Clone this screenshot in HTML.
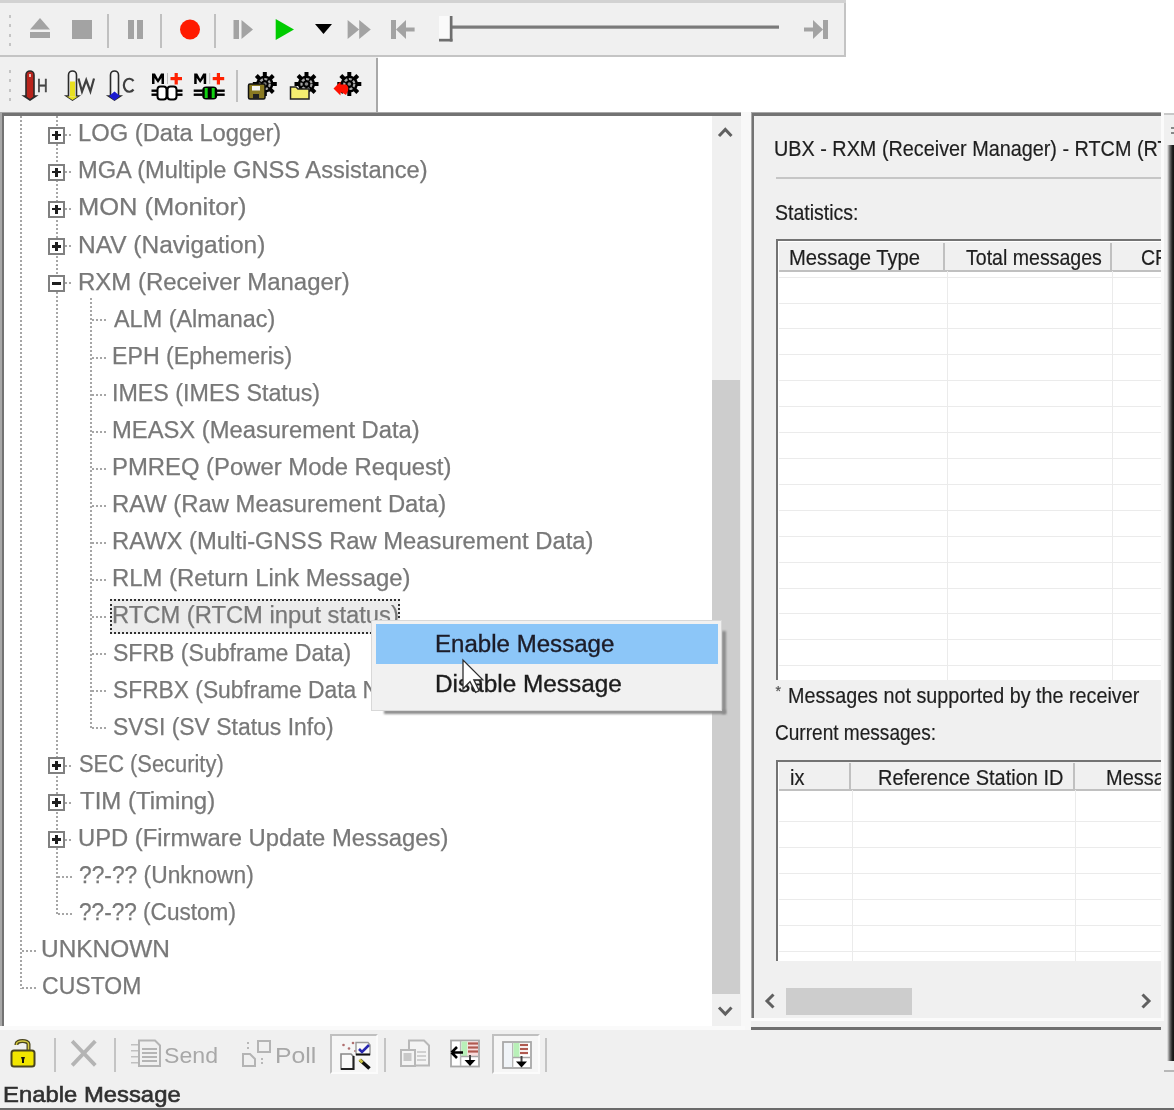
<!DOCTYPE html>
<html><head><meta charset="utf-8"><style>
html,body{margin:0;padding:0;}
body{width:1174px;height:1110px;position:relative;overflow:hidden;background:#f0f0f0;font-family:"Liberation Sans",sans-serif;}
#root{position:absolute;left:0;top:0;width:1174px;height:1110px;overflow:hidden;filter:blur(0.45px);}
</style></head><body><div id="root">
<div style="position:absolute;left:846px;top:0px;width:328px;height:113px;background:#fff;"></div>
<div style="position:absolute;left:378px;top:57px;width:468px;height:56px;background:#fff;"></div>
<div style="position:absolute;left:0px;top:0px;width:846px;height:3px;background:#d2d2d2;"></div>
<div style="position:absolute;left:0px;top:3px;width:845px;height:54px;background:#f0f0f0;"></div>
<div style="position:absolute;left:844px;top:3px;width:2px;height:54px;background:#c4c4c4;"></div>
<div style="position:absolute;left:0px;top:55px;width:846px;height:2px;background:#c4c4c4;"></div>
<div style="position:absolute;left:0px;top:57px;width:377px;height:56px;background:#f0f0f0;"></div>
<div style="position:absolute;left:376px;top:58px;width:2px;height:55px;background:#a8a8a8;"></div>
<div style="position:absolute;left:8.5px;top:15px;width:2.5px;height:2.5px;background:#c4c4c4;"></div>
<div style="position:absolute;left:8.5px;top:24px;width:2.5px;height:2.5px;background:#c4c4c4;"></div>
<div style="position:absolute;left:8.5px;top:34px;width:2.5px;height:2.5px;background:#c4c4c4;"></div>
<div style="position:absolute;left:8.5px;top:43px;width:2.5px;height:2.5px;background:#c4c4c4;"></div>
<div style="position:absolute;left:8.5px;top:70px;width:2.5px;height:2.5px;background:#c4c4c4;"></div>
<div style="position:absolute;left:8.5px;top:79px;width:2.5px;height:2.5px;background:#c4c4c4;"></div>
<div style="position:absolute;left:8.5px;top:89px;width:2.5px;height:2.5px;background:#c4c4c4;"></div>
<div style="position:absolute;left:8.5px;top:98px;width:2.5px;height:2.5px;background:#c4c4c4;"></div>
<div style="position:absolute;left:107px;top:14px;width:2px;height:34px;background:#c0c0c0;"></div>
<div style="position:absolute;left:160px;top:14px;width:2px;height:34px;background:#c0c0c0;"></div>
<div style="position:absolute;left:214px;top:14px;width:2px;height:34px;background:#c0c0c0;"></div>
<div style="position:absolute;left:236px;top:70px;width:2px;height:32px;background:#c0c0c0;"></div>
<svg style="position:absolute;left:0;top:0" width="846" height="113">
 <g fill="#a3a3a3">
  <polygon points="30,29.5 40,18 50,29.5"/>
  <rect x="30" y="32" width="20" height="6"/>
  <rect x="72" y="20" width="20" height="19"/>
  <rect x="128" y="20" width="6" height="19"/>
  <rect x="137" y="20" width="6" height="19"/>
  <rect x="233.5" y="20" width="5.5" height="19"/>
  <polygon points="241.5,20 253,29.5 241.5,39"/>
  <polygon points="347.6,20 359.2,29.5 347.6,39"/>
  <polygon points="359.2,20 370.8,29.5 359.2,39"/>
  <rect x="391" y="20" width="5" height="19"/>
  <polygon points="396,29.5 406,20 406,39"/>
  <rect x="404" y="27.5" width="10.6" height="4"/>
  <rect x="823" y="20" width="5" height="19"/>
  <polygon points="823,29.5 813,20 813,39"/>
  <rect x="804" y="27.5" width="11" height="4"/>
 </g>
 <circle cx="190" cy="29.5" r="10" fill="#ff1a00"/>
 <polygon points="275.7,19 294,29.5 275.7,40" fill="#00cc00"/>
 <polygon points="315,24 332,24 323.5,34" fill="#000"/>
 <rect x="452" y="25.5" width="327" height="3.2" fill="#7a7a7a"/>
 <rect x="439" y="16" width="13" height="25" fill="#fafafa"/>
 <rect x="449.8" y="16" width="2.7" height="25.5" fill="#6e6e6e"/>
 <rect x="439" y="38.8" width="13.5" height="2.7" fill="#6e6e6e"/>
 <!-- thermometers -->
 <g stroke="#2a2a2a" stroke-width="1.6">
  <path d="M26,96 L26,75 A4,4 0 0 1 34,75 L34,96 L36,96 L30,100 L24,96 Z" fill="#b8241c"/>
  <path d="M68.5,96 L68.5,75 A4,4 0 0 1 76.5,75 L76.5,96 L78.5,96 L72.5,100 L66.5,96 Z" fill="#f4f4f4"/>
  <path d="M110.5,96 L110.5,75 A4,4 0 0 1 118.5,75 L118.5,96 L120.5,96 L114.5,100 L108.5,96 Z" fill="#f4f4f4"/>
 </g>
 <rect x="70" y="81.5" width="5" height="15" fill="#e8e020"/>
 <polygon points="67,96.5 72.5,100 78,96.5" fill="#e8e020"/>
 <polygon points="109,96 114.5,100.5 120,96 114.5,91.5" fill="#1a1ad0"/>
 <rect x="29" y="74" width="2" height="3" fill="#e8c0b8"/>
 <g fill="#444" font-family="Liberation Sans" font-size="19">
  <text x="37" y="92" transform="translate(37,0) scale(0.78,1) translate(-37,0)" stroke="#444" stroke-width="0.6">H</text>
 </g>
 <g fill="none" stroke="#404040" stroke-width="2.2">
  <polyline points="78.5,78.5 82,91.5 86.2,80 90.4,91.5 94,78.5"/>
  <path d="M133.5,81 A5.5,6.5 0 1 0 133.5,89.5"/>
 </g>
 <!-- M+ connectors -->
 <g id="mplus">
  <path d="M152,84 L152,73.5 L155,73.5 L158,79 L161,73.5 L164,73.5 L164,84 L161.5,84 L161.5,78 L158,83 L154.5,78 L154.5,84 Z" fill="#000"/>
  <rect x="167" y="73" width="1" height="11" fill="#bbb"/>
  <rect x="170.5" y="77" width="11.5" height="3.2" fill="#ff2000"/>
  <rect x="174.6" y="73" width="3.2" height="11.5" fill="#ff2000"/>
  <g fill="#000">
   <rect x="151.5" y="89.5" width="7" height="2.4"/><rect x="151.5" y="93.5" width="7" height="2.4"/>
   <rect x="175.5" y="89.5" width="7" height="2.4"/><rect x="175.5" y="93.5" width="7" height="2.4"/>
  </g>
  <rect x="157.5" y="86.5" width="9" height="13" rx="3" fill="#fff" stroke="#000" stroke-width="2"/>
  <rect x="167.5" y="86.5" width="9" height="13" rx="3" fill="#fff" stroke="#000" stroke-width="2"/>
 </g>
 <g transform="translate(42.2,0)">
  <path d="M152,84 L152,73.5 L155,73.5 L158,79 L161,73.5 L164,73.5 L164,84 L161.5,84 L161.5,78 L158,83 L154.5,78 L154.5,84 Z" fill="#000"/>
  <rect x="167" y="73" width="1" height="11" fill="#bbb"/>
  <rect x="170.5" y="77" width="11.5" height="3.2" fill="#ff2000"/>
  <rect x="174.6" y="73" width="3.2" height="11.5" fill="#ff2000"/>
  <g fill="#000">
   <rect x="151.5" y="89.5" width="9" height="2.4"/><rect x="151.5" y="93.5" width="9" height="2.4"/>
   <rect x="174.5" y="89.5" width="8" height="2.4"/><rect x="174.5" y="93.5" width="8" height="2.4"/>
  </g>
  <rect x="160" y="86.5" width="15" height="13" rx="4" fill="#000"/>
  <rect x="162.5" y="88" width="3" height="10" fill="#10d010"/>
  <rect x="169.5" y="88" width="3" height="10" fill="#10d010"/>
 </g>
 <!-- gears -->
 <defs>
  <g id="gear">
   <circle cx="0" cy="0" r="8.6" fill="#000"/>
   <g fill="#000">
    <rect x="-2" y="-12" width="4" height="24"/>
    <rect x="-2" y="-12" width="4" height="24" transform="rotate(45)"/>
    <rect x="-2" y="-12" width="4" height="24" transform="rotate(90)"/>
    <rect x="-2" y="-12" width="4" height="24" transform="rotate(135)"/>
   </g>
   <circle cx="0" cy="0" r="5" fill="none" stroke="#a8a8a8" stroke-width="2.2" stroke-dasharray="3 1.5"/>
   <circle cx="0" cy="0" r="1.8" fill="#888"/>
  </g>
 </defs>
 <use href="#gear" x="264.8" y="84"/>
 <use href="#gear" x="306.5" y="84"/>
 <use href="#gear" x="349.3" y="84"/>
 <rect x="248.5" y="84" width="16.5" height="15" rx="1.5" fill="#8a7a22" stroke="#111" stroke-width="1.5"/>
 <rect x="252" y="86" width="8" height="4.5" fill="#f4f4f4"/>
 <rect x="253" y="94" width="6" height="5" fill="#222"/>
 <path d="M290.5,99 L290.5,87 L296,87 L298,89 L309,89 L309,99 Z" fill="#f5ee70" stroke="#222" stroke-width="1.5"/>
 <path d="M333.5,88.5 L340.5,81.5 L340.5,84.5 L346,84.5 Q349,86 348,91 L346,95 L342,92.5 L340.5,92.5 L340.5,95.5 Z" fill="#ff1000"/>
</svg>

<div style="position:absolute;left:0px;top:111.5px;width:743px;height:4.5px;background:#a8a8a8;"></div>
<div style="position:absolute;left:0px;top:111.5px;width:4px;height:915.5px;background:#a8a8a8;"></div>
<div style="position:absolute;left:1.6px;top:113.2px;width:741px;height:2.8px;background:#737373;"></div>
<div style="position:absolute;left:1.6px;top:113.2px;width:2.4px;height:913.8px;background:#737373;"></div>
<div style="position:absolute;left:4px;top:116px;width:708px;height:910px;background:#fff;"></div>
<div style="position:absolute;left:741px;top:112px;width:10px;height:918px;background:#f8f8f8;"></div>
<div style="position:absolute;left:0px;top:1026px;width:745px;height:4px;background:#fafafa;"></div>
<div style="position:absolute;left:712px;top:116px;width:29px;height:910px;background:#f0f0f0;"></div>
<div style="position:absolute;left:712px;top:380px;width:28px;height:614px;background:#cdcdcd;"></div>
<svg style="position:absolute;left:0;top:0" width="745" height="1030"><polyline points="719,136 725.3,129.5 731.5,136" fill="none" stroke="#606060" stroke-width="3"/><polyline points="719,1007.5 725.3,1014 731.5,1007.5" fill="none" stroke="#606060" stroke-width="3"/></svg>
<div style="position:absolute;left:20px;top:116px;width:2px;height:873px;background:repeating-linear-gradient(to bottom,#a6a6a6 0 2px,transparent 2px 4px);"></div>
<div style="position:absolute;left:22px;top:949.98px;width:16px;height:2px;background:repeating-linear-gradient(to right,#a6a6a6 0 2px,transparent 2px 4px);"></div>
<div style="position:absolute;left:22px;top:987.07px;width:16px;height:2px;background:repeating-linear-gradient(to right,#a6a6a6 0 2px,transparent 2px 4px);"></div>
<div style="position:absolute;left:56px;top:116px;width:2px;height:798px;background:repeating-linear-gradient(to bottom,#a6a6a6 0 2px,transparent 2px 4px);"></div>
<div style="position:absolute;left:90px;top:298px;width:2px;height:431.44000000000005px;background:repeating-linear-gradient(to bottom,#a6a6a6 0 2px,transparent 2px 4px);"></div>
<div style="position:absolute;left:65px;top:134.0px;width:7px;height:2px;background:repeating-linear-gradient(to right,#a6a6a6 0 2px,transparent 2px 4px);"></div>
<div style="position:absolute;left:48px;top:126.5px;width:17px;height:17px;box-sizing:border-box;border:2.3px solid #808080;background:#fff;"></div>
<div style="position:absolute;left:52px;top:133.75px;width:9px;height:2.5px;background:#1e1e1e;"></div>
<div style="position:absolute;left:55.2px;top:130.5px;width:2.5px;height:9px;background:#1e1e1e;"></div>
<div style="position:absolute;left:65px;top:171.09px;width:7px;height:2px;background:repeating-linear-gradient(to right,#a6a6a6 0 2px,transparent 2px 4px);"></div>
<div style="position:absolute;left:48px;top:163.59px;width:17px;height:17px;box-sizing:border-box;border:2.3px solid #808080;background:#fff;"></div>
<div style="position:absolute;left:52px;top:170.84px;width:9px;height:2.5px;background:#1e1e1e;"></div>
<div style="position:absolute;left:55.2px;top:167.59px;width:2.5px;height:9px;background:#1e1e1e;"></div>
<div style="position:absolute;left:65px;top:208.18px;width:7px;height:2px;background:repeating-linear-gradient(to right,#a6a6a6 0 2px,transparent 2px 4px);"></div>
<div style="position:absolute;left:48px;top:200.68px;width:17px;height:17px;box-sizing:border-box;border:2.3px solid #808080;background:#fff;"></div>
<div style="position:absolute;left:52px;top:207.93px;width:9px;height:2.5px;background:#1e1e1e;"></div>
<div style="position:absolute;left:55.2px;top:204.68px;width:2.5px;height:9px;background:#1e1e1e;"></div>
<div style="position:absolute;left:65px;top:245.27px;width:7px;height:2px;background:repeating-linear-gradient(to right,#a6a6a6 0 2px,transparent 2px 4px);"></div>
<div style="position:absolute;left:48px;top:237.77px;width:17px;height:17px;box-sizing:border-box;border:2.3px solid #808080;background:#fff;"></div>
<div style="position:absolute;left:52px;top:245.02px;width:9px;height:2.5px;background:#1e1e1e;"></div>
<div style="position:absolute;left:55.2px;top:241.77px;width:2.5px;height:9px;background:#1e1e1e;"></div>
<div style="position:absolute;left:65px;top:282.36px;width:7px;height:2px;background:repeating-linear-gradient(to right,#a6a6a6 0 2px,transparent 2px 4px);"></div>
<div style="position:absolute;left:48px;top:274.86px;width:17px;height:17px;box-sizing:border-box;border:2.3px solid #808080;background:#fff;"></div>
<div style="position:absolute;left:52px;top:282.11px;width:9px;height:2.5px;background:#1e1e1e;"></div>
<div style="position:absolute;left:92px;top:319.45000000000005px;width:16px;height:2px;background:repeating-linear-gradient(to right,#a6a6a6 0 2px,transparent 2px 4px);"></div>
<div style="position:absolute;left:92px;top:356.54px;width:16px;height:2px;background:repeating-linear-gradient(to right,#a6a6a6 0 2px,transparent 2px 4px);"></div>
<div style="position:absolute;left:92px;top:393.63px;width:16px;height:2px;background:repeating-linear-gradient(to right,#a6a6a6 0 2px,transparent 2px 4px);"></div>
<div style="position:absolute;left:92px;top:430.72px;width:16px;height:2px;background:repeating-linear-gradient(to right,#a6a6a6 0 2px,transparent 2px 4px);"></div>
<div style="position:absolute;left:92px;top:467.81000000000006px;width:16px;height:2px;background:repeating-linear-gradient(to right,#a6a6a6 0 2px,transparent 2px 4px);"></div>
<div style="position:absolute;left:92px;top:504.90000000000003px;width:16px;height:2px;background:repeating-linear-gradient(to right,#a6a6a6 0 2px,transparent 2px 4px);"></div>
<div style="position:absolute;left:92px;top:541.99px;width:16px;height:2px;background:repeating-linear-gradient(to right,#a6a6a6 0 2px,transparent 2px 4px);"></div>
<div style="position:absolute;left:92px;top:579.08px;width:16px;height:2px;background:repeating-linear-gradient(to right,#a6a6a6 0 2px,transparent 2px 4px);"></div>
<div style="position:absolute;left:92px;top:616.1700000000001px;width:16px;height:2px;background:repeating-linear-gradient(to right,#a6a6a6 0 2px,transparent 2px 4px);"></div>
<div style="position:absolute;left:92px;top:653.26px;width:16px;height:2px;background:repeating-linear-gradient(to right,#a6a6a6 0 2px,transparent 2px 4px);"></div>
<div style="position:absolute;left:92px;top:690.35px;width:16px;height:2px;background:repeating-linear-gradient(to right,#a6a6a6 0 2px,transparent 2px 4px);"></div>
<div style="position:absolute;left:92px;top:727.44px;width:16px;height:2px;background:repeating-linear-gradient(to right,#a6a6a6 0 2px,transparent 2px 4px);"></div>
<div style="position:absolute;left:65px;top:764.5300000000001px;width:7px;height:2px;background:repeating-linear-gradient(to right,#a6a6a6 0 2px,transparent 2px 4px);"></div>
<div style="position:absolute;left:48px;top:757.0300000000001px;width:17px;height:17px;box-sizing:border-box;border:2.3px solid #808080;background:#fff;"></div>
<div style="position:absolute;left:52px;top:764.2800000000001px;width:9px;height:2.5px;background:#1e1e1e;"></div>
<div style="position:absolute;left:55.2px;top:761.0300000000001px;width:2.5px;height:9px;background:#1e1e1e;"></div>
<div style="position:absolute;left:65px;top:801.6200000000001px;width:7px;height:2px;background:repeating-linear-gradient(to right,#a6a6a6 0 2px,transparent 2px 4px);"></div>
<div style="position:absolute;left:48px;top:794.1200000000001px;width:17px;height:17px;box-sizing:border-box;border:2.3px solid #808080;background:#fff;"></div>
<div style="position:absolute;left:52px;top:801.3700000000001px;width:9px;height:2.5px;background:#1e1e1e;"></div>
<div style="position:absolute;left:55.2px;top:798.1200000000001px;width:2.5px;height:9px;background:#1e1e1e;"></div>
<div style="position:absolute;left:65px;top:838.71px;width:7px;height:2px;background:repeating-linear-gradient(to right,#a6a6a6 0 2px,transparent 2px 4px);"></div>
<div style="position:absolute;left:48px;top:831.21px;width:17px;height:17px;box-sizing:border-box;border:2.3px solid #808080;background:#fff;"></div>
<div style="position:absolute;left:52px;top:838.46px;width:9px;height:2.5px;background:#1e1e1e;"></div>
<div style="position:absolute;left:55.2px;top:835.21px;width:2.5px;height:9px;background:#1e1e1e;"></div>
<div style="position:absolute;left:58px;top:875.8000000000001px;width:14px;height:2px;background:repeating-linear-gradient(to right,#a6a6a6 0 2px,transparent 2px 4px);"></div>
<div style="position:absolute;left:58px;top:912.8900000000001px;width:14px;height:2px;background:repeating-linear-gradient(to right,#a6a6a6 0 2px,transparent 2px 4px);"></div>
<div style="position:absolute;left:78.04px;top:120.31px;height:26.45px;line-height:26.45px;font-size:23px;font-weight:400;color:#787878;white-space:nowrap;transform-origin:0 0;transform:scaleX(1.0325);-webkit-text-stroke:0.25px #787878;">LOG (Data Logger)</div>
<div style="position:absolute;left:78.04px;top:157.40px;height:26.45px;line-height:26.45px;font-size:23px;font-weight:400;color:#787878;white-space:nowrap;transform-origin:0 0;transform:scaleX(1.0282);-webkit-text-stroke:0.25px #787878;">MGA (Multiple GNSS Assistance)</div>
<div style="position:absolute;left:77.88px;top:194.49px;height:26.45px;line-height:26.45px;font-size:23px;font-weight:400;color:#787878;white-space:nowrap;transform-origin:0 0;transform:scaleX(1.1081);-webkit-text-stroke:0.25px #787878;">MON (Monitor)</div>
<div style="position:absolute;left:77.97px;top:231.58px;height:26.45px;line-height:26.45px;font-size:23px;font-weight:400;color:#787878;white-space:nowrap;transform-origin:0 0;transform:scaleX(1.0647);-webkit-text-stroke:0.25px #787878;">NAV (Navigation)</div>
<div style="position:absolute;left:78.02px;top:268.67px;height:26.45px;line-height:26.45px;font-size:23px;font-weight:400;color:#787878;white-space:nowrap;transform-origin:0 0;transform:scaleX(1.0424);-webkit-text-stroke:0.25px #787878;">RXM (Receiver Manager)</div>
<div style="position:absolute;left:114.20px;top:305.76px;height:26.45px;line-height:26.45px;font-size:23px;font-weight:400;color:#787878;white-space:nowrap;transform-origin:0 0;transform:scaleX(1.0178);-webkit-text-stroke:0.25px #787878;">ALM (Almanac)</div>
<div style="position:absolute;left:112.19px;top:342.85px;height:26.45px;line-height:26.45px;font-size:23px;font-weight:400;color:#787878;white-space:nowrap;transform-origin:0 0;transform:scaleX(1.0068);-webkit-text-stroke:0.25px #787878;">EPH (Ephemeris)</div>
<div style="position:absolute;left:112.18px;top:379.94px;height:26.45px;line-height:26.45px;font-size:23px;font-weight:400;color:#787878;white-space:nowrap;transform-origin:0 0;transform:scaleX(1.0114);-webkit-text-stroke:0.25px #787878;">IMES (IMES Status)</div>
<div style="position:absolute;left:112.13px;top:417.03px;height:26.45px;line-height:26.45px;font-size:23px;font-weight:400;color:#787878;white-space:nowrap;transform-origin:0 0;transform:scaleX(1.0332);-webkit-text-stroke:0.25px #787878;">MEASX (Measurement Data)</div>
<div style="position:absolute;left:112.13px;top:454.12px;height:26.45px;line-height:26.45px;font-size:23px;font-weight:400;color:#787878;white-space:nowrap;transform-origin:0 0;transform:scaleX(1.0373);-webkit-text-stroke:0.25px #787878;">PMREQ (Power Mode Request)</div>
<div style="position:absolute;left:112.13px;top:491.21px;height:26.45px;line-height:26.45px;font-size:23px;font-weight:400;color:#787878;white-space:nowrap;transform-origin:0 0;transform:scaleX(1.0361);-webkit-text-stroke:0.25px #787878;">RAW (Raw Measurement Data)</div>
<div style="position:absolute;left:112.13px;top:528.30px;height:26.45px;line-height:26.45px;font-size:23px;font-weight:400;color:#787878;white-space:nowrap;transform-origin:0 0;transform:scaleX(1.0340);-webkit-text-stroke:0.25px #787878;">RAWX (Multi-GNSS Raw Measurement Data)</div>
<div style="position:absolute;left:112.12px;top:565.39px;height:26.45px;line-height:26.45px;font-size:23px;font-weight:400;color:#787878;white-space:nowrap;transform-origin:0 0;transform:scaleX(1.0380);-webkit-text-stroke:0.25px #787878;">RLM (Return Link Message)</div>
<div style="position:absolute;left:110px;top:599px;width:290px;height:35px;box-sizing:border-box;border:2px dotted #303030;background:#ececec;"></div>
<div style="position:absolute;left:112.13px;top:602.48px;height:26.45px;line-height:26.45px;font-size:23px;font-weight:400;color:#787878;white-space:nowrap;transform-origin:0 0;transform:scaleX(1.0328);-webkit-text-stroke:0.25px #787878;">RTCM (RTCM input status)</div>
<div style="position:absolute;left:113.20px;top:639.57px;height:26.45px;line-height:26.45px;font-size:23px;font-weight:400;color:#787878;white-space:nowrap;transform-origin:0 0;transform:scaleX(1.0017);-webkit-text-stroke:0.25px #787878;">SFRB (Subframe Data)</div>
<div style="position:absolute;left:113.21px;top:676.66px;height:26.45px;line-height:26.45px;font-size:23px;font-weight:400;color:#787878;white-space:nowrap;transform-origin:0 0;transform:scaleX(0.9910);-webkit-text-stroke:0.25px #787878;">SFRBX (Subframe Data NTC)</div>
<div style="position:absolute;left:113.20px;top:713.75px;height:26.45px;line-height:26.45px;font-size:23px;font-weight:400;color:#787878;white-space:nowrap;transform-origin:0 0;transform:scaleX(0.9973);-webkit-text-stroke:0.25px #787878;">SVSI (SV Status Info)</div>
<div style="position:absolute;left:79.15px;top:750.84px;height:26.45px;line-height:26.45px;font-size:23px;font-weight:400;color:#787878;white-space:nowrap;transform-origin:0 0;transform:scaleX(0.9513);-webkit-text-stroke:0.25px #787878;">SEC (Security)</div>
<div style="position:absolute;left:80.10px;top:787.93px;height:26.45px;line-height:26.45px;font-size:23px;font-weight:400;color:#787878;white-space:nowrap;transform-origin:0 0;transform:scaleX(1.0437);-webkit-text-stroke:0.25px #787878;">TIM (Timing)</div>
<div style="position:absolute;left:78.03px;top:825.02px;height:26.45px;line-height:26.45px;font-size:23px;font-weight:400;color:#787878;white-space:nowrap;transform-origin:0 0;transform:scaleX(1.0349);-webkit-text-stroke:0.25px #787878;">UPD (Firmware Update Messages)</div>
<div style="position:absolute;left:79.11px;top:862.11px;height:26.45px;line-height:26.45px;font-size:23px;font-weight:400;color:#787878;white-space:nowrap;transform-origin:0 0;transform:scaleX(0.9908);-webkit-text-stroke:0.25px #787878;">&#63;&#63;-&#63;&#63; (Unknown)</div>
<div style="position:absolute;left:79.12px;top:899.20px;height:26.45px;line-height:26.45px;font-size:23px;font-weight:400;color:#787878;white-space:nowrap;transform-origin:0 0;transform:scaleX(0.9822);-webkit-text-stroke:0.25px #787878;">&#63;&#63;-&#63;&#63; (Custom)</div>
<div style="position:absolute;left:40.97px;top:936.29px;height:26.45px;line-height:26.45px;font-size:23px;font-weight:400;color:#787878;white-space:nowrap;transform-origin:0 0;transform:scaleX(1.0627);-webkit-text-stroke:0.25px #787878;">UNKNOWN</div>
<div style="position:absolute;left:42.10px;top:973.38px;height:26.45px;line-height:26.45px;font-size:23px;font-weight:400;color:#787878;white-space:nowrap;transform-origin:0 0;transform:scaleX(1.0000);-webkit-text-stroke:0.25px #787878;">CUSTOM</div>
<div style="position:absolute;left:750.5px;top:111.5px;width:411px;height:4.5px;background:#a8a8a8;"></div>
<div style="position:absolute;left:750.5px;top:111.5px;width:3.8px;height:906.5px;background:#a8a8a8;"></div>
<div style="position:absolute;left:751.5px;top:113.2px;width:410px;height:2.8px;background:#737373;"></div>
<div style="position:absolute;left:751.5px;top:113.2px;width:2.8px;height:904.8px;background:#737373;"></div>
<div style="position:absolute;left:754px;top:116px;width:407px;height:902px;background:#f0f0f0;"></div>
<div style="position:absolute;left:751px;top:1018px;width:413px;height:3px;background:#fbfbfb;"></div>
<div style="position:absolute;left:1161px;top:112px;width:3px;height:909px;background:#fbfbfb;"></div>
<div style="position:absolute;left:751px;top:1027px;width:410px;height:3px;background:#6e6e6e;"></div>
<div style="position:absolute;left:754px;top:116px;width:407px;height:902px;overflow:hidden;">
<div style="position:absolute;left:20.30px;top:20.03px;height:25.3px;line-height:25.3px;font-size:22px;font-weight:400;color:#1e1e1e;white-space:nowrap;transform-origin:0 0;transform:scaleX(0.9006);-webkit-text-stroke:0.2px #1e1e1e;">UBX - RXM (Receiver Manager) - RTCM (RTCM input status)</div>
<div style="position:absolute;left:22px;top:60.5px;width:390px;height:2.5px;background:#c6c6c6;"></div>
<div style="position:absolute;left:20.89px;top:85.39px;height:24.72px;line-height:24.72px;font-size:21.5px;font-weight:400;color:#1e1e1e;white-space:nowrap;transform-origin:0 0;transform:scaleX(0.9079);-webkit-text-stroke:0.2px #1e1e1e;">Statistics:</div>
<div style="position:absolute;left:22px;top:123px;width:400px;height:441px;background:#fff;"></div>
<div style="position:absolute;left:22px;top:123px;width:400px;height:2.2px;background:#737373;"></div>
<div style="position:absolute;left:22px;top:123px;width:2.2px;height:441px;background:#737373;"></div>
<div style="position:absolute;left:24.5px;top:125.5px;width:400px;height:29.5px;background:#f0f0f0;"></div>
<div style="position:absolute;left:24.5px;top:154px;width:400px;height:2px;background:#c0c0c0;"></div>
<div style="position:absolute;left:188.5px;top:127px;width:2px;height:28px;background:#c0c0c0;"></div>
<div style="position:absolute;left:356px;top:127px;width:2px;height:28px;background:#c0c0c0;"></div>
<div style="position:absolute;left:24.5px;top:160.60000000000002px;width:400px;height:1px;background:#ebebeb;"></div>
<div style="position:absolute;left:24.5px;top:186.51000000000005px;width:400px;height:1px;background:#ebebeb;"></div>
<div style="position:absolute;left:24.5px;top:212.42000000000002px;width:400px;height:1px;background:#ebebeb;"></div>
<div style="position:absolute;left:24.5px;top:238.33000000000004px;width:400px;height:1px;background:#ebebeb;"></div>
<div style="position:absolute;left:24.5px;top:264.24px;width:400px;height:1px;background:#ebebeb;"></div>
<div style="position:absolute;left:24.5px;top:290.15000000000003px;width:400px;height:1px;background:#ebebeb;"></div>
<div style="position:absolute;left:24.5px;top:316.06000000000006px;width:400px;height:1px;background:#ebebeb;"></div>
<div style="position:absolute;left:24.5px;top:341.97px;width:400px;height:1px;background:#ebebeb;"></div>
<div style="position:absolute;left:24.5px;top:367.88px;width:400px;height:1px;background:#ebebeb;"></div>
<div style="position:absolute;left:24.5px;top:393.79px;width:400px;height:1px;background:#ebebeb;"></div>
<div style="position:absolute;left:24.5px;top:419.70000000000005px;width:400px;height:1px;background:#ebebeb;"></div>
<div style="position:absolute;left:24.5px;top:445.61px;width:400px;height:1px;background:#ebebeb;"></div>
<div style="position:absolute;left:24.5px;top:471.52px;width:400px;height:1px;background:#ebebeb;"></div>
<div style="position:absolute;left:24.5px;top:497.43000000000006px;width:400px;height:1px;background:#ebebeb;"></div>
<div style="position:absolute;left:24.5px;top:523.34px;width:400px;height:1px;background:#ebebeb;"></div>
<div style="position:absolute;left:24.5px;top:549.25px;width:400px;height:1px;background:#ebebeb;"></div>
<div style="position:absolute;left:192.5px;top:155px;width:1px;height:409px;background:#ebebeb;"></div>
<div style="position:absolute;left:358px;top:155px;width:1px;height:409px;background:#ebebeb;"></div>
<div style="position:absolute;left:34.82px;top:130.09px;height:24.72px;line-height:24.72px;font-size:21.5px;font-weight:400;color:#1e1e1e;white-space:nowrap;transform-origin:0 0;transform:scaleX(0.9401);-webkit-text-stroke:0.2px #1e1e1e;">Message Type</div>
<div style="position:absolute;left:212.00px;top:130.09px;height:24.72px;line-height:24.72px;font-size:21.5px;font-weight:400;color:#1e1e1e;white-space:nowrap;transform-origin:0 0;transform:scaleX(0.9094);-webkit-text-stroke:0.2px #1e1e1e;">Total messages</div>
<div style="position:absolute;left:387.00px;top:130.09px;height:24.72px;line-height:24.72px;font-size:21.5px;font-weight:400;color:#1e1e1e;white-space:nowrap;transform-origin:0 0;transform:scaleX(0.9094);-webkit-text-stroke:0.2px #1e1e1e;">CRC</div>
<div style="position:absolute;left:21.50px;top:567.10px;height:16.1px;line-height:16.1px;font-size:14px;font-weight:400;color:#505050;white-space:nowrap;transform-origin:0 0;transform:scaleX(1.0000);-webkit-text-stroke:0.2px #505050;">*</div>
<div style="position:absolute;left:33.56px;top:568.49px;height:24.72px;line-height:24.72px;font-size:21.5px;font-weight:400;color:#1e1e1e;white-space:nowrap;transform-origin:0 0;transform:scaleX(0.9184);-webkit-text-stroke:0.2px #1e1e1e;">Messages not supported by the receiver</div>
<div style="position:absolute;left:20.91px;top:605.39px;height:24.72px;line-height:24.72px;font-size:21.5px;font-weight:400;color:#1e1e1e;white-space:nowrap;transform-origin:0 0;transform:scaleX(0.8866);-webkit-text-stroke:0.2px #1e1e1e;">Current messages:</div>
<div style="position:absolute;left:22px;top:643.5px;width:400px;height:201.5px;background:#fff;"></div>
<div style="position:absolute;left:22px;top:643.5px;width:400px;height:2.2px;background:#737373;"></div>
<div style="position:absolute;left:22px;top:643.5px;width:2.2px;height:201.5px;background:#737373;"></div>
<div style="position:absolute;left:24.5px;top:646.0px;width:400px;height:28px;background:#f0f0f0;"></div>
<div style="position:absolute;left:24.5px;top:673px;width:400px;height:2px;background:#c0c0c0;"></div>
<div style="position:absolute;left:95px;top:647px;width:2px;height:27px;background:#c0c0c0;"></div>
<div style="position:absolute;left:319px;top:647px;width:2px;height:27px;background:#c0c0c0;"></div>
<div style="position:absolute;left:24.5px;top:705px;width:400px;height:1px;background:#ebebeb;"></div>
<div style="position:absolute;left:24.5px;top:731px;width:400px;height:1px;background:#ebebeb;"></div>
<div style="position:absolute;left:24.5px;top:757px;width:400px;height:1px;background:#ebebeb;"></div>
<div style="position:absolute;left:24.5px;top:783px;width:400px;height:1px;background:#ebebeb;"></div>
<div style="position:absolute;left:24.5px;top:809px;width:400px;height:1px;background:#ebebeb;"></div>
<div style="position:absolute;left:24.5px;top:835px;width:400px;height:1px;background:#ebebeb;"></div>
<div style="position:absolute;left:98px;top:674px;width:1px;height:171px;background:#ebebeb;"></div>
<div style="position:absolute;left:320.5px;top:674px;width:1px;height:171px;background:#ebebeb;"></div>
<div style="position:absolute;left:36.07px;top:649.69px;height:24.72px;line-height:24.72px;font-size:21.5px;font-weight:400;color:#1e1e1e;white-space:nowrap;transform-origin:0 0;transform:scaleX(0.9286);-webkit-text-stroke:0.2px #1e1e1e;">ix</div>
<div style="position:absolute;left:124.14px;top:649.69px;height:24.72px;line-height:24.72px;font-size:21.5px;font-weight:400;color:#1e1e1e;white-space:nowrap;transform-origin:0 0;transform:scaleX(0.9289);-webkit-text-stroke:0.2px #1e1e1e;">Reference Station ID</div>
<div style="position:absolute;left:352.44px;top:649.69px;height:24.72px;line-height:24.72px;font-size:21.5px;font-weight:400;color:#1e1e1e;white-space:nowrap;transform-origin:0 0;transform:scaleX(0.9289);-webkit-text-stroke:0.2px #1e1e1e;">Message</div>
<div style="position:absolute;left:0px;top:871.5px;width:407px;height:29px;background:#f0f0f0;"></div>
<div style="position:absolute;left:32px;top:872px;width:126px;height:27px;background:#cdcdcd;"></div>
<svg style="position:absolute;left:0;top:0" width="407" height="902"><g transform="translate(-754,-116)" fill="none" stroke="#606060" stroke-width="3"><polyline points="773.5,994.5 767,1001 773.5,1007.5"/><polyline points="1142.5,994.5 1149,1001 1142.5,1007.5"/></g></svg>
</div>
<div style="position:absolute;left:1164px;top:113px;width:10px;height:2px;background:#c8c8c8;"></div>
<div style="position:absolute;left:1164px;top:115px;width:10px;height:995px;background:#f0f0f0;"></div>
<div style="position:absolute;left:1167px;top:145px;width:7px;height:916px;background:linear-gradient(to right,#f0f0f0,#707070 40%,#222 75%,#111);"></div>
<div style="position:absolute;left:1164px;top:1070px;width:10px;height:2px;background:#b8b8b8;"></div>
<div style="position:absolute;left:1171px;top:127px;width:3px;height:2px;background:#888;"></div>
<div style="position:absolute;left:1171px;top:132px;width:3px;height:2px;background:#888;"></div>
<div style="position:absolute;left:0px;top:1030px;width:1164px;height:80px;background:#f0f0f0;"></div>
<div style="position:absolute;left:53.8px;top:1038px;width:2px;height:34px;background:#c4c4c4;"></div>
<div style="position:absolute;left:114.2px;top:1038px;width:2px;height:34px;background:#c4c4c4;"></div>
<div style="position:absolute;left:384px;top:1038px;width:2px;height:34px;background:#c4c4c4;"></div>
<div style="position:absolute;left:544.5px;top:1038px;width:2px;height:34px;background:#c4c4c4;"></div>
<div style="position:absolute;left:330px;top:1034px;width:48px;height:40px;background:#f6f6f6;box-sizing:border-box;border-top:2px solid #c0c0c0;border-left:2px solid #c0c0c0;border-bottom:2px solid #fbfbfb;border-right:2px solid #fbfbfb;"></div>
<div style="position:absolute;left:492px;top:1034px;width:48px;height:40px;background:#f6f6f6;box-sizing:border-box;border-top:2px solid #c0c0c0;border-left:2px solid #c0c0c0;border-bottom:2px solid #fbfbfb;border-right:2px solid #fbfbfb;"></div>
<svg style="position:absolute;left:0;top:1030px" width="560" height="48" viewBox="0 1030 560 48">
 <!-- lock -->
 <path d="M16.5,1045 L16.5,1044 A6,3 0 0 1 28.5,1044 L28.5,1051" fill="none" stroke="#4a4520" stroke-width="4"/>
 <path d="M16.5,1045 L16.5,1044 A6,3 0 0 1 28.5,1044 L28.5,1051" fill="none" stroke="#d8cc40" stroke-width="1.5"/>
 <rect x="11.5" y="1050.5" width="23" height="16" rx="2.5" fill="#f2e600" stroke="#4a4520" stroke-width="2"/>
 <path d="M21,1057 L25,1057 L24,1060 L24,1063 L22,1063 L22,1060 Z" fill="#111"/>
 <!-- X -->
 <g stroke="#b4b4b4" stroke-width="3.8" stroke-linecap="square">
  <line x1="73.5" y1="1042.5" x2="94" y2="1064"/>
  <line x1="94" y1="1042.5" x2="73.5" y2="1064"/>
 </g>
 <!-- send -->
 <g fill="none" stroke="#b4b4b4" stroke-width="2">
  <path d="M139,1040.5 L155,1040.5 L160,1045.5 L160,1066 L139,1066 Z"/>
  <line x1="142" y1="1049" x2="157" y2="1049"/>
  <line x1="142" y1="1053" x2="157" y2="1053"/>
  <line x1="142" y1="1057" x2="157" y2="1057"/>
  <line x1="142" y1="1061" x2="157" y2="1061"/>
 </g>
 <g fill="#c0c0c0">
  <rect x="131" y="1044" width="7" height="1.5"/><rect x="131" y="1050" width="7" height="1.5"/>
  <rect x="131" y="1056" width="7" height="1.5"/><rect x="131" y="1062" width="7" height="1.5"/>
 </g>
 <!-- poll -->
 <g fill="none" stroke="#b4b4b4" stroke-width="2">
  <path d="M243,1054 L250,1054 L255,1059 L255,1066 L243,1066 Z"/>
  <path d="M258,1041 L270,1041 L270,1052 L258,1052 Z"/>
 </g>
 <g fill="#b8b8b8"><rect x="247" y="1042" width="2" height="2"/><rect x="247" y="1047" width="2" height="2"/><rect x="261" y="1058" width="2" height="2"/><rect x="261" y="1062" width="2" height="2"/></g>
 <!-- wand -->
 <g fill="#b07070"><circle cx="343.5" cy="1045" r="1.3"/><circle cx="349" cy="1048.5" r="1.3"/><circle cx="353" cy="1043" r="1.3"/><circle cx="355" cy="1051" r="1"/></g>
 <path d="M341,1054 L351,1054 L353.5,1056.5 L353.5,1069 L341,1069 Z" fill="#fafafa" stroke="#888" stroke-width="1.6"/>
 <path d="M353.5,1056 L353.5,1069 L341,1069" fill="none" stroke="#222" stroke-width="2"/>
 <path d="M356,1042.5 L368,1042.5 L370,1045 L370,1054.5 L356,1054.5 Z" fill="#fafafa" stroke="#999" stroke-width="1.4"/>
 <path d="M356,1054.5 L370,1054.5" stroke="#111" stroke-width="2"/>
 <path d="M359,1049 L362,1052 L369,1045" fill="none" stroke="#2828b0" stroke-width="2.6"/>
 <line x1="360" y1="1060" x2="369.5" y2="1068.5" stroke="#111" stroke-width="3.6"/>
 <line x1="359.5" y1="1059.5" x2="362.5" y2="1062.5" stroke="#c8c040" stroke-width="3"/>
 <!-- copy -->
 <g fill="#f4f4f4" stroke="#b8b8b8" stroke-width="2">
  <path d="M409,1040.5 L424,1040.5 L429,1045.5 L429,1065.5 L409,1065.5 Z"/>
  <path d="M401,1050 L415,1050 L415,1066 L401,1066 Z"/>
 </g>
 <g stroke="#c4c4c4" stroke-width="1.5"><line x1="417" y1="1052" x2="426" y2="1052"/><line x1="417" y1="1056" x2="426" y2="1056"/><line x1="417" y1="1060" x2="426" y2="1060"/></g>
 <rect x="403.5" y="1053" width="8" height="8" fill="#c8c8c8"/>
 <!-- table icon 1 -->
 <rect x="451" y="1040.5" width="28" height="26" fill="#fff" stroke="#a8a8a8" stroke-width="1.8"/>
 <line x1="460.6" y1="1041" x2="460.6" y2="1066" stroke="#b8b8b8" stroke-width="1.5"/>
 <rect x="461.5" y="1041.5" width="6" height="15" fill="#b8f0b8"/>
 <rect x="467.5" y="1041.5" width="10.5" height="15" fill="#f8dcdc"/>
 <g stroke="#b05a50" stroke-width="2.2"><line x1="468" y1="1043.5" x2="478" y2="1043.5"/><line x1="468" y1="1047.5" x2="478" y2="1047.5"/><line x1="468" y1="1051.5" x2="478" y2="1051.5"/></g>
 <line x1="461" y1="1056.5" x2="478" y2="1056.5" stroke="#a8a8a8" stroke-width="1.5"/>
 <path d="M451.5,1052.5 L457,1047 M451.5,1052.5 L457,1058 M451.5,1052.5 L463,1052.5" stroke="#000" stroke-width="2.6" fill="none"/>
 <line x1="470" y1="1055" x2="470" y2="1062" stroke="#444" stroke-width="2"/>
 <polygon points="464.5,1060 475.5,1060 470,1066" fill="#000"/>
 <!-- table icon 2 -->
 <rect x="503" y="1042" width="28" height="26" fill="#fff" stroke="#a8a8a8" stroke-width="1.8"/>
 <line x1="512.6" y1="1042.5" x2="512.6" y2="1067.5" stroke="#b8b8b8" stroke-width="1.5"/>
 <rect x="504" y="1043" width="8" height="24" fill="#f0f4f8"/>
 <rect x="513.5" y="1043" width="6" height="14" fill="#b8f0b8"/>
 <g stroke="#b05a50" stroke-width="2.2"><line x1="520" y1="1045" x2="528" y2="1045"/><line x1="520" y1="1049" x2="528" y2="1049"/><line x1="520" y1="1053" x2="528" y2="1053"/></g>
 <line x1="513" y1="1057.5" x2="530" y2="1057.5" stroke="#a8a8a8" stroke-width="1.5"/>
 <line x1="521.5" y1="1056" x2="521.5" y2="1063" stroke="#444" stroke-width="2"/>
 <polygon points="516,1061.5 527,1061.5 521.5,1067.5" fill="#000"/>
</svg>

<div style="position:absolute;left:164.25px;top:1043.13px;height:25.3px;line-height:25.3px;font-size:22px;font-weight:400;color:#a8a8a8;white-space:nowrap;transform-origin:0 0;transform:scaleX(1.0510);">Send</div>
<div style="position:absolute;left:274.55px;top:1043.13px;height:25.3px;line-height:25.3px;font-size:22px;font-weight:400;color:#a8a8a8;white-space:nowrap;transform-origin:0 0;transform:scaleX(1.1273);">Poll</div>
<div style="position:absolute;left:3.18px;top:1082.17px;height:25.87px;line-height:25.87px;font-size:22.5px;font-weight:400;color:#303030;white-space:nowrap;transform-origin:0 0;transform:scaleX(1.0600);-webkit-text-stroke:0.6px #303030;">Enable Message</div>
<div style="position:absolute;left:0px;top:1108px;width:1174px;height:2px;background:#6a6a6a;"></div>
<div style="position:absolute;left:721.5px;top:631px;width:4.5px;height:83px;background:#8c8c8c;filter:blur(0.8px);"></div>
<div style="position:absolute;left:384px;top:710px;width:342px;height:4px;background:#8c8c8c;filter:blur(0.8px);"></div>
<div style="position:absolute;left:371px;top:619.5px;width:350.5px;height:91px;box-sizing:border-box;border:1.5px solid #d8d8d8;background:#f1f1f1;"></div>
<div style="position:absolute;left:376.2px;top:624px;width:341.6px;height:40.3px;background:#8cc6f8;"></div>
<div style="position:absolute;left:434.55px;top:630.55px;height:27.02px;line-height:27.02px;font-size:23.5px;font-weight:400;color:#1c1c28;white-space:nowrap;transform-origin:0 0;transform:scaleX(1.0244);-webkit-text-stroke:0.35px #1c1c28;">Enable Message</div>
<div style="position:absolute;left:434.53px;top:671.35px;height:27.02px;line-height:27.02px;font-size:23.5px;font-weight:400;color:#1c1c1c;white-space:nowrap;transform-origin:0 0;transform:scaleX(1.0362);-webkit-text-stroke:0.35px #1c1c1c;">Disable Message</div>
<svg style="position:absolute;left:0;top:0;width:1174px;height:1110px" viewBox="0 0 1174 1110"><polygon points="463,660 463,689 470,681.6 475.6,692.4 479.2,690.6 473.8,679.8 482.8,679.8" fill="#fff" stroke="#303030" stroke-width="1.3"/></svg>
</div></body></html>
